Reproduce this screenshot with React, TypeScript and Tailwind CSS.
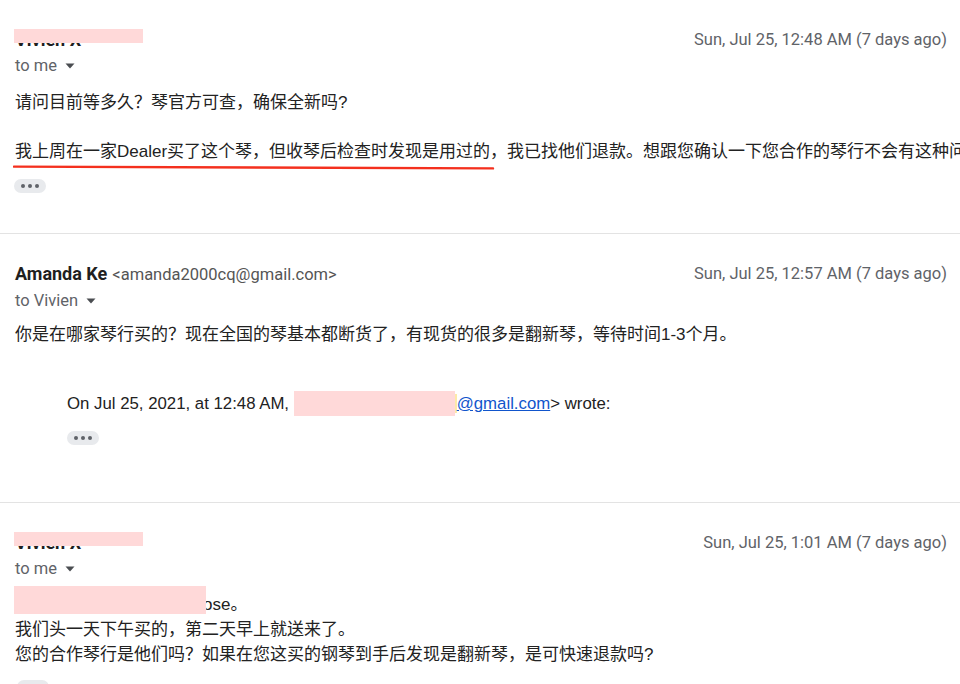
import React from "react";

const head = "font-['Roboto','Noto_Sans_CJK_SC',sans-serif]";
const face = "font-['Liberation_Sans','Noto_Sans_CJK_SC',sans-serif] leading-[25px] text-[#222222]";
const body = `${face} text-[17px]`;

function Caret() {
  return (
    <svg width="10" height="6" viewBox="0 0 10 6" className="ml-[8px]">
      <path d="M0.5 0.5h9L5 5.5z" fill="#4a4d51" />
    </svg>
  );
}

function Dots() {
  return (
    <div className="flex h-[14px] w-[32px] items-center justify-center gap-[3px] rounded-full bg-[#e8eaed]">
      <span className="h-[4px] w-[4px] rounded-full bg-[#5f6368]" />
      <span className="h-[4px] w-[4px] rounded-full bg-[#5f6368]" />
      <span className="h-[4px] w-[4px] rounded-full bg-[#5f6368]" />
    </div>
  );
}

function Header({ name, email, time, hidden }: { name: string; email?: string; time: string; hidden?: boolean }) {
  return (
    <div className={`flex items-start justify-between ${head}`}>
      <div className="relative flex items-baseline leading-[24px]">
        <span className="text-[18px] font-bold text-[#1f1f1f]">{name}</span>
        {email && <span className="ml-[5px] text-[16.5px] text-[#555555]">{email}</span>}
        {hidden && <div className="absolute left-[-1px] top-[1px] h-[13.5px] w-[129px] bg-[#ffd9d9]" />}
      </div>
      <span className="mt-[2px] text-[16.5px] leading-[20px] text-[#5f6368]">{time}</span>
    </div>
  );
}

function To({ who }: { who: string }) {
  return (
    <div className={`mt-[4px] flex items-center text-[16.5px] leading-[20px] text-[#5f6368] ${head}`}>
      <span>to {who}</span>
      <Caret />
    </div>
  );
}

export default function App() {
  return (
    <div className="h-[684px] w-[960px] overflow-hidden whitespace-nowrap bg-white">
      {/* first message */}
      <div className="pl-[15px] pr-[13px] pt-[28px] pb-[40px]">
        <Header name="Vivien X" time="Sun, Jul 25, 12:48 AM (7 days ago)" hidden />
        <To who="me" />
        <div className={`mt-[14px] ${body}`}>
          <div>请问目前等多久？琴官方可查，确保全新吗?</div>
          <div className="h-[24px]" />
          <div className="relative">
            我上周在一家Dealer买了这个琴，但收琴后检查时发现是用过的，我已找他们退款。想跟您确认一下您合作的琴行不会有这种问
            <svg className="absolute left-[-2px] top-[26px]" width="482" height="5" viewBox="0 0 482 5">
              <path d="M1 1.6C120 1.9 300 2.4 480 3.4" stroke="#f4301e" strokeWidth="2.4" fill="none" strokeLinecap="round" />
            </svg>
          </div>
        </div>
        <div className="mt-[15px] -ml-[1px]">
          <Dots />
        </div>
      </div>

      <div className="h-px bg-[#e3e3e3]" />

      {/* second message */}
      <div className="pl-[15px] pr-[13px] pt-[28px] pb-[57px]">
        <Header name="Amanda Ke" email="<amanda2000cq@gmail.com>" time="Sun, Jul 25, 12:57 AM (7 days ago)" />
        <To who="Vivien" />
        <div className={`mt-[11px] ${body}`}>
          你是在哪家琴行买的？现在全国的琴基本都断货了，有现货的很多是翻新琴，等待时间1-3个月。
        </div>
        <div className={`ml-[52px] mt-[44px] ${face} text-[16.8px]`}>
          On Jul 25, 2021, at 12:48 AM,{" "}
          <span className="relative z-10 inline-block h-[25px] w-[161px] bg-[#ffd9d9] align-top" />
          <span className="inline-block h-[19px] w-[2px] bg-[#fde9a8] align-[-4px]" />
          <span className="text-[#1155cc] underline">@gmail.com</span>&gt; wrote:
        </div>
        <div className="ml-[52px] mt-[15px]">
          <Dots />
        </div>
      </div>

      <div className="h-px bg-[#e3e3e3]" />

      {/* third message */}
      <div className="pl-[15px] pr-[13px] pt-[28px]">
        <Header name="Vivien X" time="Sun, Jul 25, 1:01 AM (7 days ago)" hidden />
        <To who="me" />
        <div className={`mt-[13px] ${body}`}>
          <div className="relative pl-[188px]">
            ose。
            <div className="absolute left-[-1px] top-[-6px] h-[28px] w-[192px] bg-[#ffd9d9]" />
          </div>
          <div>我们头一天下午买的，第二天早上就送来了。</div>
          <div>您的合作琴行是他们吗？如果在您这买的钢琴到手后发现是翻新琴，是可快速退款吗?</div>
        </div>
        <div className="mt-[13px] ml-[2px]">
          <Dots />
        </div>
      </div>
    </div>
  );
}
